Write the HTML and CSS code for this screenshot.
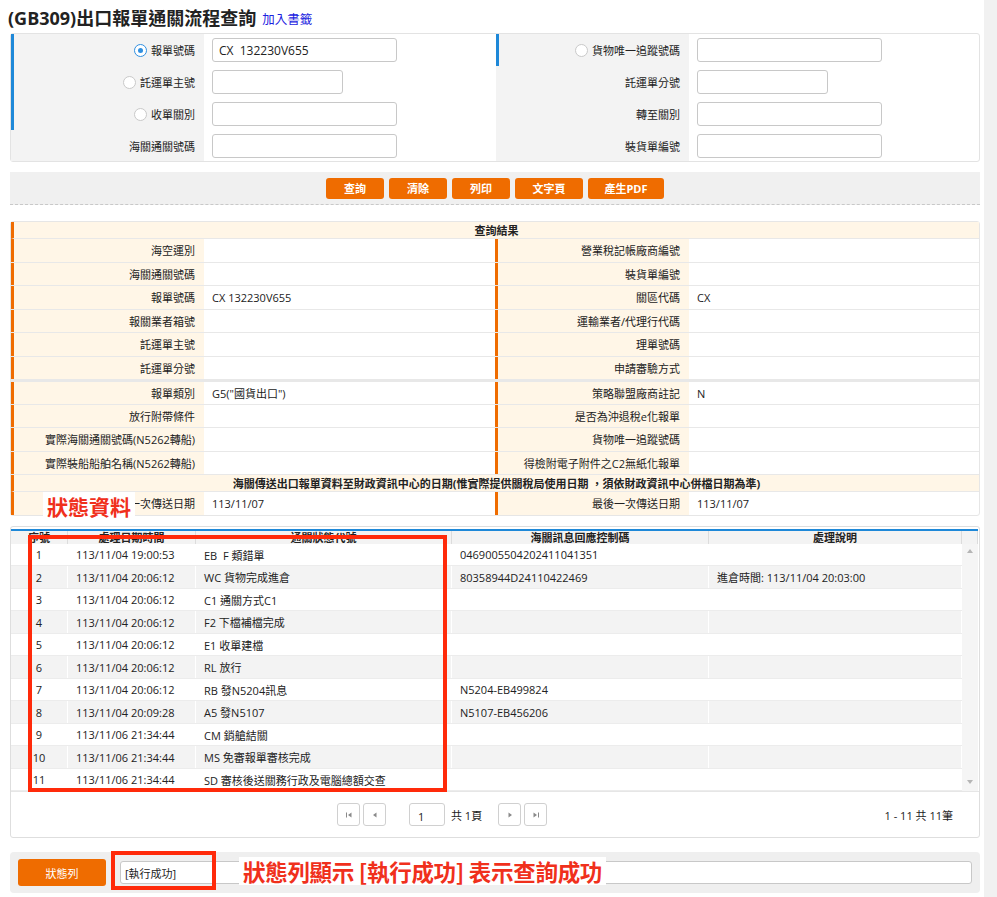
FILE: index.html
```html
<!DOCTYPE html>
<html>
<head>
  <meta charset="utf-8">
  <title>(GB309)出口報單通關流程查詢</title>
  <link rel="stylesheet" href="styles.css">
</head>
<body>
  <div class="page">
    <div class="main">
      <h1 class="page-title">(GB309)出口報單通關流程查詢 <a class="bookmark" href="#">加入書籤</a></h1>

      <!-- 查詢條件 -->
      <div class="query-form">
        <div class="f-label mark"><span class="radio checked"></span>報單號碼</div>
        <div class="f-value"><input class="f-input" type="text" value="CX  132230V655"></div>
        <div class="f-label mark"><span class="radio"></span>貨物唯一追蹤號碼</div>
        <div class="f-value"><input class="f-input" type="text"></div>

        <div class="f-label mark"><span class="radio"></span>託運單主號</div>
        <div class="f-value"><input class="f-input short" type="text"></div>
        <div class="f-label">託運單分號</div>
        <div class="f-value"><input class="f-input short" type="text"></div>

        <div class="f-label mark"><span class="radio"></span>收單關別</div>
        <div class="f-value"><input class="f-input" type="text"></div>
        <div class="f-label">轉至關別</div>
        <div class="f-value"><input class="f-input" type="text"></div>

        <div class="f-label">海關通關號碼</div>
        <div class="f-value"><input class="f-input" type="text"></div>
        <div class="f-label">裝貨單編號</div>
        <div class="f-value"><input class="f-input" type="text"></div>
      </div>

      <div class="button-bar">
        <button class="btn">查詢</button>
        <button class="btn">清除</button>
        <button class="btn">列印</button>
        <button class="btn wide">文字頁</button>
        <button class="btn wider">產生PDF</button>
      </div>

      <!-- 查詢結果 -->
      <div class="result-panel">
        <div class="r-head">查詢結果</div>
        <div class="r-section">
          <div class="r-row"><div class="r-label">海空運別</div><div class="r-value"></div><div class="r-label">營業稅記帳廠商編號</div><div class="r-value"></div></div>
          <div class="r-row"><div class="r-label">海關通關號碼</div><div class="r-value"></div><div class="r-label">裝貨單編號</div><div class="r-value"></div></div>
          <div class="r-row"><div class="r-label">報單號碼</div><div class="r-value">CX 132230V655</div><div class="r-label">關區代碼</div><div class="r-value">CX</div></div>
          <div class="r-row"><div class="r-label">報關業者箱號</div><div class="r-value"></div><div class="r-label">運輸業者/代理行代碼</div><div class="r-value"></div></div>
          <div class="r-row"><div class="r-label">託運單主號</div><div class="r-value"></div><div class="r-label">理單號碼</div><div class="r-value"></div></div>
          <div class="r-row"><div class="r-label">託運單分號</div><div class="r-value"></div><div class="r-label">申請審驗方式</div><div class="r-value"></div></div>
        </div>
        <div class="r-section second">
          <div class="r-row"><div class="r-label">報單類別</div><div class="r-value">G5("國貨出口")</div><div class="r-label">策略聯盟廠商註記</div><div class="r-value">N</div></div>
          <div class="r-row"><div class="r-label">放行附帶條件</div><div class="r-value"></div><div class="r-label">是否為沖退稅e化報單</div><div class="r-value"></div></div>
          <div class="r-row"><div class="r-label">實際海關通關號碼(N5262轉船)</div><div class="r-value"></div><div class="r-label">貨物唯一追蹤號碼</div><div class="r-value"></div></div>
          <div class="r-row"><div class="r-label">實際裝船船舶名稱(N5262轉船)</div><div class="r-value"></div><div class="r-label">得檢附電子附件之C2無紙化報單</div><div class="r-value"></div></div>
          <div class="r-note">海關傳送出口報單資料至財政資訊中心的日期(惟實際提供關稅局使用日期 ，須依財政資訊中心併檔日期為準)</div>
          <div class="r-row last"><div class="r-label">第一次傳送日期</div><div class="r-value">113/11/07</div><div class="r-label">最後一次傳送日期</div><div class="r-value">113/11/07</div></div>
        </div>
      </div>

      <!-- 狀態資料 -->
      <div class="grid-panel">
        <div class="grid-head">
          <div class="gh">序號</div>
          <div class="gh">處理日期時間</div>
          <div class="gh">通關狀態代號</div>
          <div class="gh">海關訊息回應控制碼</div>
          <div class="gh">處理說明</div>
          <div class="gh"></div>
        </div>
        <div class="grid-body">
          <div class="grid-rows">
            <div class="g-row"><div class="gc num">1</div><div class="gc">113/11/04 19:00:53</div><div class="gc">EB&nbsp; F 類錯單</div><div class="gc">0469005504202411041351</div><div class="gc"></div></div>
            <div class="g-row"><div class="gc num">2</div><div class="gc">113/11/04 20:06:12</div><div class="gc">WC 貨物完成進倉</div><div class="gc">80358944D24110422469</div><div class="gc">進倉時間: 113/11/04 20:03:00</div></div>
            <div class="g-row"><div class="gc num">3</div><div class="gc">113/11/04 20:06:12</div><div class="gc">C1 通關方式C1</div><div class="gc"></div><div class="gc"></div></div>
            <div class="g-row"><div class="gc num">4</div><div class="gc">113/11/04 20:06:12</div><div class="gc">F2 下檔補檔完成</div><div class="gc"></div><div class="gc"></div></div>
            <div class="g-row"><div class="gc num">5</div><div class="gc">113/11/04 20:06:12</div><div class="gc">E1 收單建檔</div><div class="gc"></div><div class="gc"></div></div>
            <div class="g-row"><div class="gc num">6</div><div class="gc">113/11/04 20:06:12</div><div class="gc">RL 放行</div><div class="gc"></div><div class="gc"></div></div>
            <div class="g-row"><div class="gc num">7</div><div class="gc">113/11/04 20:06:12</div><div class="gc">RB 發N5204訊息</div><div class="gc">N5204-EB499824</div><div class="gc"></div></div>
            <div class="g-row"><div class="gc num">8</div><div class="gc">113/11/04 20:09:28</div><div class="gc">A5 發N5107</div><div class="gc">N5107-EB456206</div><div class="gc"></div></div>
            <div class="g-row"><div class="gc num">9</div><div class="gc">113/11/06 21:34:44</div><div class="gc">CM 銷艙結關</div><div class="gc"></div><div class="gc"></div></div>
            <div class="g-row"><div class="gc num">10</div><div class="gc">113/11/06 21:34:44</div><div class="gc">MS 免審報單審核完成</div><div class="gc"></div><div class="gc"></div></div>
            <div class="g-row"><div class="gc num">11</div><div class="gc">113/11/06 21:34:44</div><div class="gc">SD 審核後送關務行政及電腦總額交查</div><div class="gc"></div><div class="gc"></div></div>
          </div>
          <div class="vscroll">
            <svg width="8" height="6" viewBox="0 0 8 6"><polygon points="4,1 7,5 1,5" fill="#b5b5b5"/></svg>
            <svg width="8" height="6" viewBox="0 0 8 6"><polygon points="1,1 7,1 4,5" fill="#b5b5b5"/></svg>
          </div>
        </div>
        <div class="pager">
          <div class="pg-btn"><svg width="8" height="8" viewBox="0 0 8 8"><rect x="1" y="1.5" width="1" height="5" fill="#8a8a8a"/><polygon points="6.5,1.5 3,4 6.5,6.5" fill="#8a8a8a"/></svg></div>
          <div class="pg-btn"><svg width="8" height="8" viewBox="0 0 8 8"><polygon points="5.5,1.5 2,4 5.5,6.5" fill="#8a8a8a"/></svg></div>
          <input class="pg-input" type="text" value="1">
          <span class="pg-total">共 1頁</span>
          <div class="pg-btn next"><svg width="8" height="8" viewBox="0 0 8 8"><polygon points="2.5,1.5 6,4 2.5,6.5" fill="#8a8a8a"/></svg></div>
          <div class="pg-btn"><svg width="8" height="8" viewBox="0 0 8 8"><polygon points="1.5,1.5 5,4 1.5,6.5" fill="#8a8a8a"/><rect x="6" y="1.5" width="1" height="5" fill="#8a8a8a"/></svg></div>
          <span class="pg-info">1 - 11 共 11筆</span>
        </div>
      </div>

      <div class="status-bar">
        <button class="btn status-btn">狀態列</button>
        <input class="status-input" type="text" value="[執行成功]">
      </div>
    </div>
    <div class="scroll-track"></div>

    <!-- 說明標註 -->
    <div class="note-label">狀態資料</div>
    <div class="note-box rows-box"></div>
    <div class="note-box status-box"></div>
    <div class="note-label status-note">狀態列顯示 [執行成功] 表示查詢成功</div>
  </div>
</body>
</html>
```

FILE: styles.css
```css
* {
  box-sizing: border-box;
}

body {
  margin: 0;
  font-family: "Open Sans", "Noto Sans CJK TC", sans-serif;
  font-size: 11.5px;
  color: #222;
  background-color: #fff;
}

.page {
  position: relative;
  display: flex;
  min-height: 100vh;
}

.main {
  flex: 1;
  padding-left: 10px;
}

.scroll-track {
  width: 13px;
  background-color: #f1f1f1;
}

.page-title {
  margin: 0 0 0 -2px;
  height: 33px;
  display: flex;
  align-items: center;
  gap: 6px;
  font-size: 18px;
  font-weight: bold;
  color: #222;
}

.bookmark {
  font-size: 12.5px;
  font-weight: normal;
  color: #1b22e0;
  text-decoration: none;
  margin-top: 3px;
}

/* 查詢條件 */
.query-form {
  width: 970px;
  display: grid;
  grid-template-columns: 193px 292px 193px 1fr;
  grid-template-rows: 32px 32px 32px 31px;
  border: 1px solid #e3e3e3;
  border-radius: 3px;
}

.f-label {
  display: flex;
  align-items: center;
  justify-content: flex-end;
  gap: 4px;
  padding-right: 9px;
  background-color: #f3f3f3;
  border-left: 3px solid #f3f3f3;
  font-size: 11px;
}

.f-label.mark {
  border-left-color: #1e88d8;
}

.f-value {
  display: flex;
  align-items: center;
  padding-left: 8px;
}

.radio {
  width: 13px;
  height: 13px;
  border-radius: 50%;
  border: 1px solid #c9c9c9;
  background-color: #fff;
  position: relative;
}

.radio.checked {
  border-color: #2f8fe0;
}

.radio.checked:after {
  content: '';
  position: absolute;
  top: 3px;
  left: 3px;
  width: 5px;
  height: 5px;
  border-radius: 50%;
  background-color: #2f8fe0;
}

.f-input {
  width: 185px;
  height: 24px;
  border: 1px solid #c8c8c8;
  border-radius: 3px;
  padding: 0 6px;
  font-family: inherit;
  font-size: 12px;
  color: #222;
}

.f-input.short {
  width: 131px;
}

/* 按鈕列 */
.button-bar {
  width: 970px;
  margin-top: 10px;
  height: 33px;
  display: flex;
  justify-content: center;
  align-items: center;
  gap: 5px;
  background-color: #f0f0f0;
  border-bottom: 1px dashed #c8c8c8;
}

.btn {
  width: 58px;
  height: 21px;
  padding: 0;
  border: none;
  border-radius: 3px;
  background-color: #ef6c00;
  color: #fff;
  font-family: inherit;
  font-size: 11px;
  font-weight: bold;
  cursor: pointer;
}

.btn.wide {
  width: 68px;
}

.btn.wider {
  width: 76px;
}

/* 查詢結果 */
.result-panel {
  width: 970px;
  margin-top: 16px;
  border: 1px solid #e6e6e6;
  border-radius: 3px;
}

.r-head,
.r-note {
  height: 17px;
  display: flex;
  align-items: center;
  justify-content: center;
  background-color: #fff6e7;
  border-left: 3px solid #ef6c00;
  border-bottom: 1px solid #e8e8e8;
  font-weight: bold;
  font-size: 11px;
}

.r-section.second {
  border-top: 2px solid #e8e8e8;
}

.r-row {
  display: grid;
  grid-template-columns: 193px 291px 194px 1fr;
  height: 23.5px;
  border-bottom: 1px solid #e8e8e8;
}

.r-section.second .r-row {
  height: 23.2px;
}

.r-row.last {
  border-bottom: none;
}

.r-label {
  display: flex;
  align-items: center;
  justify-content: flex-end;
  padding-right: 9px;
  background-color: #fff6e7;
  border-left: 3px solid #ef6c00;
  font-size: 11px;
}

.r-value {
  display: flex;
  align-items: center;
  padding-left: 8px;
  font-size: 11px;
}

/* 狀態資料 grid */
.grid-panel {
  width: 970px;
  margin-top: 10px;
  border: 1px solid #dedede;
  border-radius: 3px;
  padding-top: 2px;
}

.grid-head {
  display: grid;
  grid-template-columns: 57px 128px 256px 257px 253px 16px;
  height: 15px;
  border-top: 2px solid #1e88d8;
  background-color: #f3f3f3;
  margin-right: 1px;
}

.gh {
  display: flex;
  align-items: center;
  justify-content: center;
  border-right: 1px solid #dcdcdc;
  font-size: 11px;
  font-weight: bold;
  line-height: 1;
  overflow: hidden;
}

.grid-body {
  display: flex;
  margin-right: 1px;
}

.grid-rows {
  flex: 1;
}

.g-row {
  display: grid;
  grid-template-columns: 57px 128px 256px 257px 1fr;
  height: 22.5px;
  border-bottom: 1px solid #ececec;
}

.g-row:nth-child(even) {
  background-color: #f3f3f3;
}

.gc {
  display: flex;
  align-items: center;
  padding-left: 8px;
  border-right: 1px solid #fff;
  font-size: 11px;
  white-space: nowrap;
}

.gc.num {
  justify-content: center;
  padding-left: 0;
}

.vscroll {
  width: 16px;
  display: flex;
  flex-direction: column;
  justify-content: space-between;
  align-items: center;
  padding: 4px 0 6px;
  background-color: #f5f5f5;
}

.pager {
  height: 46px;
  display: flex;
  align-items: center;
  padding-left: 326px;
  padding-right: 26px;
  border-top: 1px solid #e6e6e6;
}

.pg-btn {
  width: 23px;
  height: 23px;
  display: flex;
  align-items: center;
  justify-content: center;
  margin-right: 3px;
  border: 1px solid #d0d0d0;
  border-radius: 3px;
  background-color: #fff;
}

.pg-btn.next {
  margin-left: 16px;
}

.pg-input {
  width: 36px;
  height: 23px;
  margin-left: 20px;
  border: 1px solid #d0d0d0;
  border-radius: 3px;
  padding: 4px 0 0 8px;
  font-family: inherit;
  font-size: 11px;
  color: #222;
}

.pg-total {
  margin-left: 6px;
  font-size: 11px;
}

.pg-info {
  margin-left: auto;
  font-size: 11px;
}

/* 狀態列 */
.status-bar {
  width: 970px;
  margin-top: 14px;
  height: 41px;
  display: flex;
  align-items: center;
  padding: 0 8px;
  background-color: #efefef;
  border-radius: 4px;
}

.btn.status-btn {
  width: 88px;
  height: 27px;
  font-weight: normal;
}

.status-input {
  flex: 1;
  height: 23px;
  margin-left: 14px;
  border: 1px solid #c8c8c8;
  border-radius: 3px;
  padding: 0 4px;
  font-family: inherit;
  font-size: 11px;
  color: #222;
}

/* 紅色標註 */
.note-label {
  position: absolute;
  left: 43px;
  top: 492px;
  height: 28px;
  padding: 0 4px;
  display: flex;
  align-items: center;
  background-color: #fff;
  color: #f0301c;
  font-size: 21px;
  font-weight: bold;
  font-family: "Noto Sans CJK TC", sans-serif;
}

.note-label.status-note {
  left: 239px;
  top: 857px;
  font-size: 22.5px;
  letter-spacing: -0.3px;
}

.note-box {
  position: absolute;
  border: 4px solid #ff2a0a;
}

.rows-box {
  left: 28px;
  top: 535px;
  width: 419px;
  height: 257px;
}

.status-box {
  left: 111px;
  top: 851px;
  width: 105px;
  height: 39px;
}
```
